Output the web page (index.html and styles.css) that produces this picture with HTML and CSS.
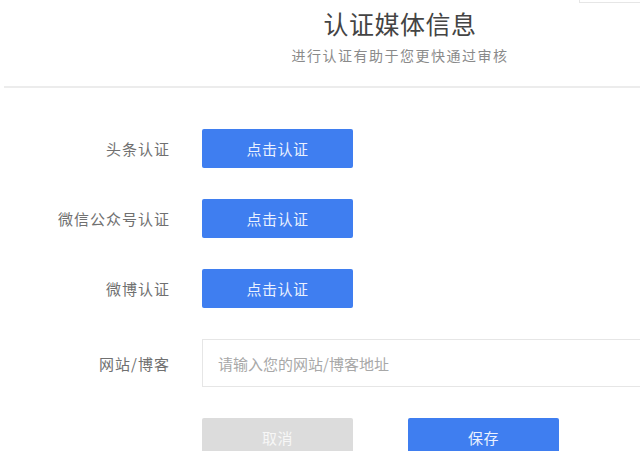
FILE: index.html
```html
<!DOCTYPE html>
<html lang="zh-CN">
<head>
<meta charset="utf-8">
<title>认证媒体信息</title>
<link rel="stylesheet" href="styles.css">
</head>
<body>
<div class="page">
  <header class="header">
    <div class="topbar"><span class="stub"></span></div>
    <h1 class="title">认证媒体信息</h1>
    <p class="subtitle">进行认证有助于您更快通过审核</p>
  </header>
  <div class="divider"></div>
  <form class="form">
    <label class="label">头条认证</label>
    <div class="field"><button type="button" class="btn btn-primary">点击认证</button></div>
    <label class="label">微信公众号认证</label>
    <div class="field"><button type="button" class="btn btn-primary">点击认证</button></div>
    <label class="label">微博认证</label>
    <div class="field"><button type="button" class="btn btn-primary">点击认证</button></div>
    <label class="label">网站/博客</label>
    <div class="field"><input class="input" type="text" placeholder="请输入您的网站/博客地址"></div>
    <div class="label"></div>
    <div class="field actions">
      <button type="button" class="btn btn-muted">取消</button>
      <button type="button" class="btn btn-primary">保存</button>
    </div>
  </form>
</div>
</body>
</html>
```

FILE: styles.css
```css
html, body {
  margin: 0;
  padding: 0;
  background: #ffffff;
  overflow: hidden;
}
body {
  font-family: "Noto Sans CJK SC", "Noto Sans", sans-serif;
  color: #555;
}
.page {
  width: 640px;
  height: 451px;
  overflow: hidden;
}
.header {
  display: flex;
  flex-direction: column;
  align-items: center;
  padding-left: 160px;
  height: 86px;
  box-sizing: border-box;
}
.topbar {
  align-self: stretch;
  display: flex;
  justify-content: flex-end;
  height: 3px;
}
.stub {
  width: 60px;
  height: 2px;
  border: 1px solid #e6e6e6;
  border-top: none;
  border-right: none;
}
.title {
  margin: 4px 0 0 0;
  font-size: 25px;
  line-height: 32px;
  font-weight: 400;
  color: #444;
  letter-spacing: 0.5px;
}
.subtitle {
  margin: 7px 0 0 0;
  font-size: 14px;
  line-height: 18px;
  color: #8a8a8a;
  letter-spacing: 1.5px;
}
.divider {
  height: 2px;
  margin-left: 4px;
  background: #ececec;
}
.form {
  display: grid;
  grid-template-columns: 170px 1fr;
  column-gap: 32px;
  row-gap: 31px;
  margin-top: 41px;
}
.label {
  display: flex;
  align-items: center;
  justify-content: flex-end;
  font-size: 15px;
  color: #707070;
  letter-spacing: 1px;
  white-space: nowrap;
}
.field {
  display: flex;
  align-items: center;
}
.btn {
  width: 151px;
  height: 39px;
  border: none;
  border-radius: 2px;
  font-family: inherit;
  font-size: 15px;
  color: #ffffff;
  letter-spacing: 0.5px;
  padding: 0;
}
.btn-primary {
  background: #3f7ef0;
  color: #eaf1ff;
}
.btn-muted {
  background: #dcdcdc;
  color: #f7f7f7;
}
.input {
  width: 480px;
  height: 48px;
  box-sizing: border-box;
  border: 1px solid #e6e6e6;
  padding: 0 15px;
  font-family: inherit;
  font-size: 15px;
  color: #555;
  outline: none;
}
.input::placeholder {
  color: #a8a8a8;
}
.actions {
  gap: 55px;
}
```
